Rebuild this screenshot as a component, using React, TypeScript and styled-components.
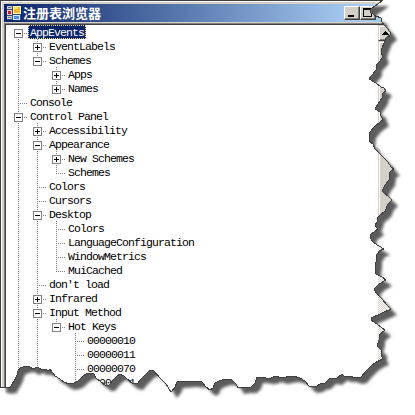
import React from "react";
import styled, { createGlobalStyle } from "styled-components";

const GlobalStyle = createGlobalStyle`
  body { margin: 0; background: #fff; overflow: hidden; }
  * { box-sizing: border-box; }
`;

const TEAR =
  "383,0 378,4 372,8 370,10 371,13 376,16 381,18 382,22 384,25 388,29 391,34 386,38 384,43 382,48 381,52 383,57 380,61 376,65 376,70 372,75 369,79 376,83 381,87 384,88 386,91 383,93 382,98 378,104 376,107 375,109 380,112 381,116 383,120 376,125 370,132 369,141 373,144 375,149 383,157 388,162 391,167 394,169 390,172 389,180 385,185 382,191 384,193 388,196 392,200 388,204 385,211 378,217 377,222 375,225 378,229 371,234 370,238 374,243 379,246 384,249 379,251 376,256 376,262 375,268 376,274 382,277 386,280 379,284 374,289 376,293 382,299 387,305 391,309 380,314 371,318 371,320 381,327 385,330 379,335 379,340 377,346 381,350 381,355 383,359 378,361 372,365 366,371 361,377 356,378 350,376 344,376 342,374 336,379 330,378 325,383 320,384 317,386 312,387 309,386 305,381 300,378 293,376 286,377 282,378 275,376 271,378 266,378 260,377 257,377 255,383 251,387 244,387 238,388 236,384 232,380 225,379 219,381 215,383 213,388 210,390 206,387 202,382 190,381 177,382 175,387 171,392 166,384 160,378 154,371 151,370 147,373 141,379 137,384 132,383 128,380 124,376 120,374 117,376 113,380 109,385 105,385 101,382 96,378 94,374 90,373 86,374 82,377 78,381 74,383 69,384 64,382 60,379 55,376 53,373 50,369 48,371 46,369 41,369 37,367 33,369 30,367 27,366 23,367 20,368 18,371 17,375 14,381 12,384 10,388 8,387 5,388 3,387 0,387";

const CLIP = "0px 0px, " + TEAR.split(" ").map((p) => p.split(",").map((n) => n + "px").join(" ")).join(", ");

const Stage = styled.main`
  position: relative;
  width: 415px;
  height: 415px;
  background: #fff;
  overflow: hidden;
`;

const Overlay = styled.svg`
  position: absolute;
  inset: 0;
  pointer-events: none;
`;

const WindowFrame = styled.section`
  position: relative;
  display: flex;
  flex-direction: column;
  width: 400px;
  height: 400px;
  padding: 2px 0 0 2px;
  border-left: 1px solid #404040;
  border-top: 1px solid #404040;
  background: #d4d0c8;
  box-shadow: inset 1px 1px #fff;
  clip-path: polygon(${CLIP});
`;

const TitleBar = styled.header`
  display: flex;
  align-items: center;
  flex: none;
  height: 18px;
  margin: 1px 0 1px 1px;
  width: 396px;
  padding: 0 24px 0 3px;
  background: linear-gradient(90deg, #0a246a, #a6caf0 88%);
`;

const AppIcon = styled.svg`
  flex: none;
  width: 14px;
  height: 14px;
`;

const Title = styled.h1`
  flex: 1;
  margin: 0 0 0 2px;
  color: #fff;
  font: bold 13px/18px "Noto Sans CJK SC", sans-serif;
  white-space: nowrap;
`;

const Caption = styled.span`
  display: flex;
  flex: none;
  width: 16px;
  height: 14px;
  background: #d4d0c8;
  border: 1px solid;
  border-color: #fff #404040 #404040 #fff;
  box-shadow: inset -1px -1px #808080;
`;

const Client = styled.div`
  display: flex;
  flex: 1;
  min-height: 0;
  margin: 0 0 0 1px;
  border-left: 1px solid #808080;
  border-top: 1px solid #808080;
`;

const Tree = styled.ul`
  flex: none;
  width: 373px;
  margin: 0;
  padding: 0 0 0 3px;
  list-style: none;
  background: #fff;
  border-left: 1px solid #404040;
  border-top: 1px solid #404040;
  overflow: hidden;
`;

const Row = styled.li`
  display: flex;
  height: 14px;
`;

const Cell = styled.svg`
  flex: none;
  width: 19px;
  height: 14px;
`;

const Label = styled.span<{ $selected?: boolean }>`
  height: 14px;
  padding: 0 2px;
  color: ${(p) => (p.$selected ? "#fff" : "#000")};
  background: ${(p) => (p.$selected ? "#0a246a" : "transparent")};
  outline: ${(p) => (p.$selected ? "1px dotted #f5db95" : "none")};
  outline-offset: -1px;
  font: 11.5px/16px "Liberation Mono", monospace;
  letter-spacing: -0.9px;
  white-space: pre;
`;

const ScrollBar = styled.div`
  display: flex;
  flex-direction: column;
  flex: 1;
  border-top: 1px solid #404040;
  background: repeating-conic-gradient(#fff 0 25%, #d4d0c8 0 50%) 0 0 / 2px 2px;
`;

const ScrollPart = styled.div<{ $size: number }>`
  flex: none;
  height: ${(p) => p.$size}px;
  background: #d4d0c8;
  border: 1px solid #d4d0c8;
  border-bottom-color: #404040;
  box-shadow: inset 1px 1px #fff, inset 0 -1px #808080;
`;

type Guide = "|" | " " | "t" | "l" | "f";
type Node = { g: string; box?: "+" | "-"; text: string };

const nodes: Node[] = [
  { g: "f", box: "-", text: "AppEvents" },
  { g: "|t", box: "+", text: "EventLabels" },
  { g: "|l", box: "-", text: "Schemes" },
  { g: "| t", box: "+", text: "Apps" },
  { g: "| l", box: "+", text: "Names" },
  { g: "t", text: "Console" },
  { g: "t", box: "-", text: "Control Panel" },
  { g: "|t", box: "+", text: "Accessibility" },
  { g: "|t", box: "-", text: "Appearance" },
  { g: "||t", box: "+", text: "New Schemes" },
  { g: "||l", text: "Schemes" },
  { g: "|t", text: "Colors" },
  { g: "|t", text: "Cursors" },
  { g: "|t", box: "-", text: "Desktop" },
  { g: "||t", text: "Colors" },
  { g: "||t", text: "LanguageConfiguration" },
  { g: "||t", text: "WindowMetrics" },
  { g: "||l", text: "MuiCached" },
  { g: "|t", text: "don't load" },
  { g: "|t", box: "+", text: "Infrared" },
  { g: "|t", box: "-", text: "Input Method" },
  { g: "||l", box: "-", text: "Hot Keys" },
  { g: "|| t", text: "00000010" },
  { g: "|| t", text: "00000011" },
  { g: "|| t", text: "00000070" },
  { g: "|| t", text: "00000071" },
];

function GuideCell({ kind, box }: { kind: Guide; box?: "+" | "-" }) {
  const own = kind !== "|" && kind !== " ";
  return (
    <Cell viewBox="0 0 19 14" shapeRendering="crispEdges">
      <g stroke="#808080" strokeDasharray="1 1" fill="none">
        {(kind === "|" || kind === "t") && <path d="M9.5 0V14" />}
        {kind === "l" && <path d="M9.5 0V9" />}
        {kind === "f" && <path d="M9.5 8V14" />}
        {own && <path d="M9 8.5H19" />}
      </g>
      {own && box && (
        <>
          <rect x="5.5" y="4.5" width="8" height="8" fill="#fff" stroke="#808080" />
          <path d={box === "+" ? "M7 8.5H12M9.5 6V11" : "M7 8.5H12"} stroke="#000" />
        </>
      )}
    </Cell>
  );
}

export default function App() {
  return (
    <Stage>
      <GlobalStyle />
      <Overlay viewBox="0 0 415 415">
        <defs>
          <filter id="soft" x="-5%" y="-5%" width="110%" height="110%">
            <feGaussianBlur stdDeviation="1.6" />
          </filter>
        </defs>
        <polygon points={"0,4 " + TEAR} transform="translate(6 6)" fill="#5c5c5c" filter="url(#soft)" />
      </Overlay>
      <WindowFrame>
        <TitleBar>
          <AppIcon viewBox="0 0 14 14" shapeRendering="crispEdges">
            <path d="M0 0H14V14H0Z" fill="#30497f" />
            <path d="M0 0H5V3H0ZM0 10H5V13H0Z" fill="#d4d0c8" />
            <path d="M1 1H4V2H1ZM1 11H4V12H1Z" fill="#506fa8" />
            <path d="M0 4H5V9H0Z" fill="#f5c8bc" />
            <path d="M1 5H4V8H1Z" fill="#c9202b" />
            <path d="M6 0H14V8H6Z" fill="#fff3b5" />
            <path d="M7 1H13V7H7Z" fill="#f0b82e" />
            <path d="M7 1H11V3H7Z" fill="#ffdf62" />
            <path d="M6 9H13V14H6Z" fill="#d9e9ff" />
            <path d="M7 10H12V13H7Z" fill="#4b8ee8" />
          </AppIcon>
          <Title>注册表浏览器</Title>
          <Caption>
            <svg width="13" height="12" shapeRendering="crispEdges"><path d="M3 8H9V10H3Z" /></svg>
          </Caption>
          <Caption>
            <svg width="13" height="12" shapeRendering="crispEdges"><path d="M2 1H11V10H2ZM3 3V9H10V3Z" fillRule="evenodd" /></svg>
          </Caption>
        </TitleBar>
        <Client>
          <Tree>
            {nodes.map((n, i) => (
              <Row key={i}>
                {n.g.split("").map((k, j) => (
                  <GuideCell key={j} kind={k as Guide} box={n.box} />
                ))}
                <Label $selected={i === 0}>{n.text}</Label>
              </Row>
            ))}
          </Tree>
          <ScrollBar>
            <ScrollPart $size={16}>
              <svg width="15" height="14" shapeRendering="crispEdges"><path d="M6 5H7V6H8V7H9V8H10V9H3V8H4V7H5V6H6Z" /></svg>
            </ScrollPart>
            <ScrollPart $size={196} />
          </ScrollBar>
        </Client>
      </WindowFrame>
      <Overlay viewBox="0 0 415 415">
        <polyline points={TEAR} fill="none" stroke="#404040" strokeWidth="1" shapeRendering="crispEdges" />
      </Overlay>
    </Stage>
  );
}
